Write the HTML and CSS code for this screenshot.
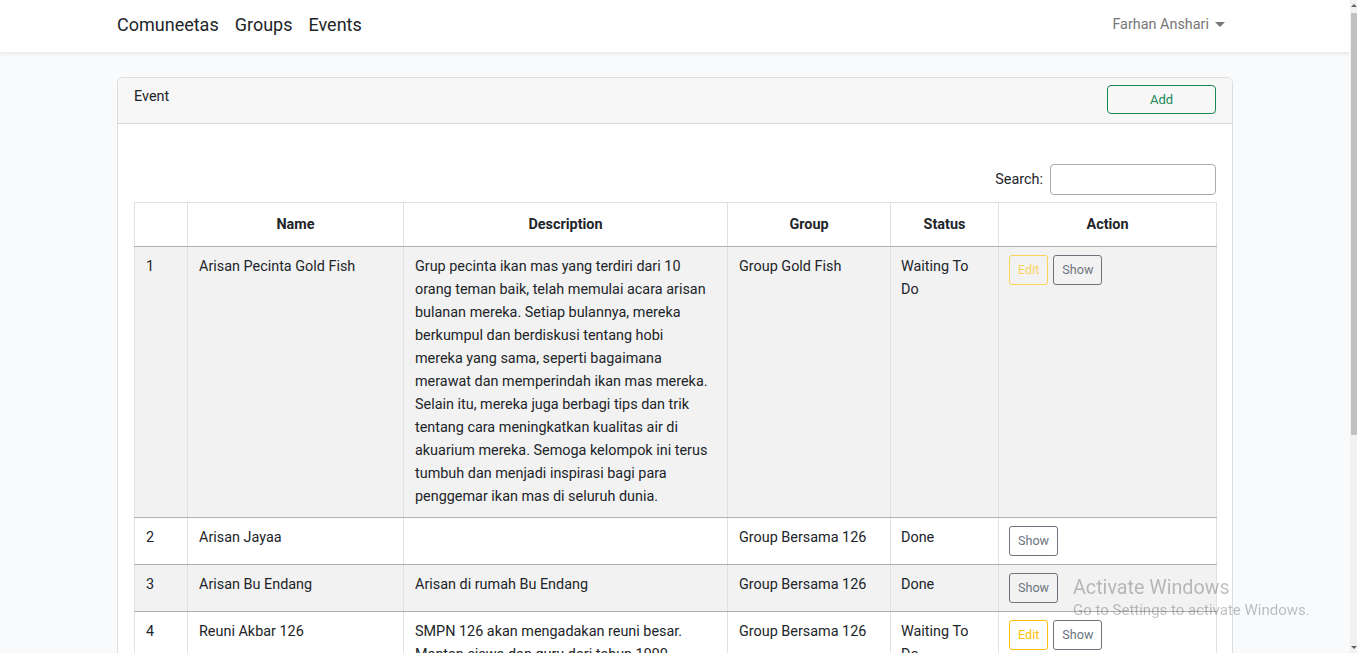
FILE: index.html
```html
<!DOCTYPE html>
<html lang="id">
<head>
<meta charset="utf-8">
<title>Comuneetas - Events</title>
<link rel="stylesheet" href="styles.css">
</head>
<body>
<div class="screen">
  <div class="viewport">
    <nav class="navbar">
      <div class="container nav-inner">
        <div class="nav-left">
          <a class="brand" href="#">Comuneetas</a>
          <a class="nav-link" href="#">Groups</a>
          <a class="nav-link" href="#">Events</a>
        </div>
        <a class="user" href="#">Farhan Anshari<span class="caret"></span></a>
      </div>
    </nav>
    <main class="container main">
      <div class="card">
        <div class="card-header">
          <span class="card-title">Event</span>
          <a class="btn-add" href="#">Add</a>
        </div>
        <div class="card-body">
          <div class="search-row">
            <label class="search-label" for="q">Search:</label>
            <input class="search-input" id="q" type="search">
          </div>
          <table class="events">
            <colgroup>
              <col class="c-no"><col class="c-name"><col class="c-desc"><col class="c-group"><col class="c-status"><col class="c-action">
            </colgroup>
            <thead>
              <tr><th></th><th>Name</th><th>Description</th><th>Group</th><th>Status</th><th>Action</th></tr>
            </thead>
            <tbody>
              <tr>
                <td>1</td>
                <td>Arisan Pecinta Gold Fish</td>
                <td class="desc">Grup pecinta ikan mas yang terdiri dari 10 orang teman baik, telah memulai acara arisan bulanan mereka. Setiap bulannya, mereka berkumpul dan berdiskusi tentang hobi mereka yang sama, seperti bagaimana merawat dan memperindah ikan mas mereka. Selain itu, mereka juga berbagi tips dan trik tentang cara meningkatkan kualitas air di akuarium mereka. Semoga kelompok ini terus tumbuh dan menjadi inspirasi bagi para penggemar ikan mas di seluruh dunia.</td>
                <td>Group Gold Fish</td>
                <td class="status">Waiting To Do</td>
                <td><div class="actions"><a class="btn btn-edit disabled" href="#">Edit</a><a class="btn btn-show" href="#">Show</a></div></td>
              </tr>
              <tr>
                <td>2</td>
                <td>Arisan Jayaa</td>
                <td class="desc"></td>
                <td>Group Bersama 126</td>
                <td class="status">Done</td>
                <td><div class="actions"><a class="btn btn-show" href="#">Show</a></div></td>
              </tr>
              <tr>
                <td>3</td>
                <td>Arisan Bu Endang</td>
                <td class="desc">Arisan di rumah Bu Endang</td>
                <td>Group Bersama 126</td>
                <td class="status">Done</td>
                <td><div class="actions"><a class="btn btn-show" href="#">Show</a></div></td>
              </tr>
              <tr>
                <td>4</td>
                <td>Reuni Akbar 126</td>
                <td class="desc">SMPN 126 akan mengadakan reuni besar. Mantan siswa dan guru dari tahun 1990 hingga 2020 diundang untuk hadir dan bernostalgia bersama.</td>
                <td>Group Bersama 126</td>
                <td class="status">Waiting To Do</td>
                <td><div class="actions"><a class="btn btn-edit" href="#">Edit</a><a class="btn btn-show" href="#">Show</a></div></td>
              </tr>
            </tbody>
          </table>
        </div>
      </div>
    </main>
  </div>
  <div class="scrollbar">
    <span class="sb-arrow sb-up"></span>
    <div class="sb-thumb"></div>
    <span class="sb-arrow sb-down"></span>
  </div>
</div>
<div class="watermark">
  <div class="wm-title">Activate Windows</div>
  <div class="wm-sub">Go to Settings to activate Windows.</div>
</div>
</body>
</html>
```
FILE: styles.css
```css
* { box-sizing: border-box; }

html, body {
  margin: 0;
  height: 100%;
  overflow: hidden;
}

body {
  font-family: Roboto, "Liberation Sans", sans-serif;
  font-size: 14.4px;
  line-height: 23px;
  color: #212529;
  background: #f8fafc;
}

a { text-decoration: none; color: inherit; }

.screen {
  display: flex;
  height: 100vh;
}

.viewport {
  flex: 0 0 1350px;
  height: 100vh;
  overflow: hidden;
}

.container {
  width: 1116px;
  margin: 0 auto;
}

/* navbar */
.navbar {
  height: 52px;
  background: #fff;
  box-shadow: 0 2px 4px rgba(0, 0, 0, 0.075);
  position: relative;
}

.nav-inner {
  height: 52px;
  display: flex;
  align-items: center;
  justify-content: space-between;
  padding-bottom: 4px;
}

.nav-left {
  display: flex;
  align-items: center;
  gap: 16px;
}

.brand, .nav-link {
  font-size: 18px;
  line-height: 27px;
  color: #212529;
}

.user {
  display: flex;
  align-items: center;
  padding-right: 8px;
  color: #777;
  font-size: 14.4px;
}

.caret {
  display: inline-block;
  margin-left: 6px;
  border-top: 5px solid #777;
  border-left: 5px solid transparent;
  border-right: 5px solid transparent;
}

/* main */
.main {
  padding-top: 25px;
}

.card {
  background: #fff;
  border: 1px solid #dcdddd;
  border-radius: 6px;
}

.card-header {
  display: flex;
  justify-content: space-between;
  align-items: flex-start;
  padding: 7px 16px 9px;
  background: #f7f7f7;
  border-bottom: 1px solid #d6d6d6;
  border-radius: 6px 6px 0 0;
}

.btn-add {
  display: block;
  width: 109px;
  height: 29px;
  line-height: 27px;
  text-align: center;
  font-size: 13px;
  color: #198754;
  border: 1px solid #198754;
  border-radius: 4px;
}

.card-body {
  padding: 16px;
}

.search-row {
  display: flex;
  justify-content: flex-end;
  align-items: center;
  gap: 7px;
  margin-top: 24px;
  margin-bottom: 7px;
}

.search-input {
  width: 166px;
  height: 31px;
  border: 1px solid #aaa;
  border-radius: 4px;
  padding: 4px 6px;
  font: inherit;
  background: #fff;
}

/* table */
.events {
  width: 100%;
  table-layout: fixed;
  border-collapse: collapse;
  border: 1px solid #dee2e6;
}

.c-no { width: 53px; }
.c-name { width: 216px; }
.c-desc { width: 324px; }
.c-group { width: 163px; }
.c-status { width: 108px; }
.c-action { width: 218px; }

.events th {
  padding: 10px;
  font-weight: 700;
  text-align: center;
  border: 1px solid #dee2e6;
  border-bottom: 1px solid #b0b0b0;
}

.events td {
  padding: 8px 10px 8px 11px;
  line-height: 1.6;
  vertical-align: top;
  text-align: left;
  border: 1px solid #dee2e6;
  border-top: 1px solid #b0b0b0;
  border-bottom: 1px solid #b0b0b0;
}

.events td.desc {
  padding-right: 18px;
}

.events td.status {
  padding-left: 10px;
}

.events tbody tr:nth-child(odd) td {
  background: #f2f2f2;
}

.actions {
  display: flex;
  gap: 5px;
  margin-left: -1px;
}

.btn {
  display: inline-block;
  height: 30px;
  line-height: 28px;
  padding: 0 8px;
  font-size: 12.6px;
  border: 1px solid;
  border-radius: 3px;
  background: transparent;
}

.btn-edit {
  color: #ffc107;
  border-color: #ffc107;
}

.btn-show {
  color: #6c757d;
  border-color: #6c757d;
}

.disabled {
  opacity: 0.65;
}

/* scrollbar strip */
.scrollbar {
  flex: 1 1 auto;
  display: flex;
  flex-direction: column;
  align-items: center;
  background: #f1f1f1;
  height: 100vh;
}

.sb-arrow {
  display: block;
  border-left: 3px solid transparent;
  border-right: 3px solid transparent;
}

.sb-up {
  margin-top: 4px;
  border-bottom: 3px solid #606060;
}

.sb-down {
  margin-top: auto;
  margin-bottom: 4px;
  border-top: 3px solid #606060;
}

.sb-thumb {
  margin-top: 6px;
  width: 6px;
  height: 422px;
  background: #c1c1c1;
}

/* Windows activation overlay */
.watermark {
  position: fixed;
  left: 1073px;
  top: 575px;
  color: rgba(0, 0, 0, 0.25);
  font-family: Roboto, "Liberation Sans", sans-serif;
  pointer-events: none;
  white-space: nowrap;
}

.wm-title {
  font-size: 19.7px;
  line-height: 26px;
}

.wm-sub {
  font-size: 15px;
  line-height: 18px;
}
```
